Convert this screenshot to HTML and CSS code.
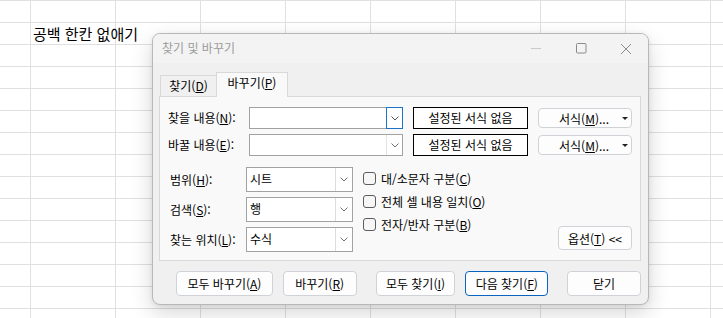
FILE: index.html
```html
<!DOCTYPE html>
<html lang="ko">
<head>
<meta charset="utf-8">
<title>찾기 및 바꾸기</title>
<link rel="stylesheet" href="styles.css">
</head>
<body>
<div class="sheet">
  <div class="cell-text">공백 한칸 없애기</div>

  <div class="dialog">
    <div class="titlebar">
      <span class="title">찾기 및 바꾸기</span>
      <span class="wc"><svg width="12" height="12" viewBox="0 0 12 12"><line x1="1" y1="5.5" x2="11" y2="5.5" stroke="#c9c9c9" stroke-width="1"/></svg></span>
      <span class="wc"><svg width="12" height="12" viewBox="0 0 12 12"><rect x="1.5" y="0.5" width="9.5" height="9.5" rx="1" fill="none" stroke="#8a8a8a" stroke-width="1"/></svg></span>
      <span class="wc"><svg width="12" height="12" viewBox="0 0 12 12"><path d="M1 1 L11 11 M11 1 L1 11" stroke="#8a8a8a" stroke-width="1" fill="none"/></svg></span>
    </div>

    <div class="dlg-body">
      <div class="tabs">
        <div class="tab">찾기(<u>D</u>)</div>
        <div class="tab tab-active">바꾸기(<u>P</u>)</div>
      </div>

      <div class="panel">
        <div class="find-row">
          <span class="lbl">찾을 내용(<u>N</u>):</span>
          <div class="combo">
            <span class="combo-field"></span>
            <span class="combo-btn combo-btn-focus"><svg width="8" height="5" viewBox="0 0 8 5"><polyline points="0.5,0.5 4,4 7.5,0.5" fill="none" stroke="#505050" stroke-width="1"/></svg></span>
          </div>
          <div class="fmt-box">설정된 서식 없음</div>
          <div class="btn fmt-btn"><span>서식(<u>M</u>)...</span><span class="caret"></span></div>
        </div>
        <div class="find-row">
          <span class="lbl">바꿀 내용(<u>E</u>):</span>
          <div class="combo">
            <span class="combo-field"></span>
            <span class="combo-btn"><svg width="8" height="5" viewBox="0 0 8 5"><polyline points="0.5,0.5 4,4 7.5,0.5" fill="none" stroke="#707070" stroke-width="1"/></svg></span>
          </div>
          <div class="fmt-box">설정된 서식 없음</div>
          <div class="btn fmt-btn"><span>서식(<u>M</u>)...</span><span class="caret"></span></div>
        </div>

        <div class="opts">
          <div class="fields">
            <span class="lbl2">범위(<u>H</u>):</span>
            <div class="select"><span class="sel-text">시트</span><span class="sel-btn"><svg width="8" height="5" viewBox="0 0 8 5"><polyline points="0.5,0.5 4,4 7.5,0.5" fill="none" stroke="#707070" stroke-width="1"/></svg></span></div>
            <span class="lbl2">검색(<u>S</u>):</span>
            <div class="select"><span class="sel-text">행</span><span class="sel-btn"><svg width="8" height="5" viewBox="0 0 8 5"><polyline points="0.5,0.5 4,4 7.5,0.5" fill="none" stroke="#707070" stroke-width="1"/></svg></span></div>
            <span class="lbl2">찾는 위치(<u>L</u>):</span>
            <div class="select"><span class="sel-text">수식</span><span class="sel-btn"><svg width="8" height="5" viewBox="0 0 8 5"><polyline points="0.5,0.5 4,4 7.5,0.5" fill="none" stroke="#707070" stroke-width="1"/></svg></span></div>
          </div>

          <div class="checks">
            <div class="chk"><span class="box"></span>대/소문자 구분(<u>C</u>)</div>
            <div class="chk"><span class="box"></span>전체 셀 내용 일치(<u>O</u>)</div>
            <div class="chk"><span class="box"></span>전자/반자 구분(<u>B</u>)</div>
          </div>

          <div class="btn opt-btn">옵션(<u>T</u>) &lt;&lt;</div>
        </div>
      </div>

      <div class="actions">
        <div class="btn act w97">모두 바꾸기(<u>A</u>)</div>
        <div class="btn act w74 g10">바꾸기(<u>R</u>)</div>
        <div class="btn act w80 g19">모두 찾기(<u>I</u>)</div>
        <div class="btn act w83 g10 primary">다음 찾기(<u>F</u>)</div>
        <div class="btn act w74 g19">닫기</div>
      </div>
    </div>
  </div>
</div>
</body>
</html>
```

FILE: styles.css
```css
* { box-sizing: border-box; }

body {
  margin: 0;
  font-family: "Noto Sans CJK KR", "Noto Sans", sans-serif;
  color: #000;
}

u {
  text-decoration-thickness: 1px;
  text-underline-offset: 1px;
}

.sheet {
  position: relative;
  width: 723px;
  height: 318px;
  overflow: hidden;
  background-color: #fff;
  background-image:
    linear-gradient(to right, #e0e0e0 1px, transparent 1px),
    linear-gradient(to bottom, #e0e0e0 1px, transparent 1px);
  background-size: 85px 22px;
  background-position: 30px 0;
}

.cell-text {
  margin-top: 23px;
  padding-left: 33px;
  height: 21px;
  line-height: 21px;
  font-size: 15px;
}

.dialog {
  position: absolute;
  left: 152px;
  top: 33px;
  width: 497px;
  height: 272px;
  background: #f0f0f0;
  border: 1px solid #b8b8b8;
  border-radius: 8px;
  overflow: hidden;
  box-shadow: 0 8px 22px rgba(0, 0, 0, 0.16), 0 1px 5px rgba(0, 0, 0, 0.08);
}

.titlebar {
  display: flex;
  height: 29px;
  background: #f3f3f3;
}

.title {
  flex: 1;
  padding-left: 9px;
  line-height: 27px;
  font-size: 12px;
  color: #9b9b9b;
}

.wc {
  width: 45px;
  height: 29px;
  display: flex;
  align-items: center;
  justify-content: center;
}

.dlg-body {
  padding: 0 7px 0 6px;
}

.tabs {
  position: relative;
  z-index: 1;
  display: flex;
  align-items: flex-end;
  height: 25px;
  margin-top: 9px;
  margin-bottom: -1px;
  padding-left: 1px;
}

.tab {
  width: 56px;
  height: 21px;
  margin-bottom: 1px;
  border: 1px solid #d9d9d9;
  border-bottom: none;
  border-right: none;
  background: #f0f0f0;
  text-align: center;
  font-size: 12px;
  line-height: 20px;
}

.tab-active {
  width: 72px;
  height: 25px;
  margin-bottom: 0;
  border-right: 1px solid #d9d9d9;
  background: #f9f9f9;
  line-height: 20px;
}

.panel {
  height: 165px;
  border: 1px solid #d9d9d9;
  background: #f9f9f9;
  padding: 10px 8px 0 8px;
}

.find-row {
  display: flex;
  align-items: center;
  height: 22px;
}

.find-row + .find-row { margin-top: 5px; }

.lbl {
  width: 81px;
  font-size: 12px;
  line-height: 16px;
}

.combo {
  display: flex;
  width: 154px;
  height: 22px;
  border: 1px solid #a2a2a2;
  background: #fff;
}

.combo-field { flex: 1; }

.combo-btn {
  width: 16px;
  display: flex;
  align-items: center;
  justify-content: center;
  border-left: 1px solid #e2e2e2;
}

.combo-btn-focus {
  width: 17px;
  margin: -1px -1px -1px 0;
  border: 1px solid #1a73c8;
}

.fmt-box {
  margin-left: 10px;
  width: 115px;
  height: 22px;
  border: 1px solid #000;
  background: #fff;
  text-align: center;
  font-size: 12px;
  line-height: 19px;
}

.btn {
  display: flex;
  align-items: center;
  justify-content: center;
  border: 1px solid #cfd3d8;
  border-radius: 4px;
  background: #fdfdfd;
  font-size: 12px;
}

.fmt-btn {
  margin-left: 10px;
  width: 94px;
  height: 20px;
  justify-content: flex-start;
  padding-left: 20px;
  padding-right: 3px;
}

.caret {
  margin-left: auto;
  width: 0;
  height: 0;
  border-left: 3px solid transparent;
  border-right: 3px solid transparent;
  border-top: 3px solid #222;
}

.opts {
  display: flex;
  margin-top: 11px;
}

.fields {
  display: grid;
  grid-template-columns: 78px 107px;
  grid-auto-rows: 25px;
  row-gap: 5px;
  align-items: center;
}

.lbl2 {
  padding-left: 2px;
  font-size: 12px;
  line-height: 16px;
}

.select {
  display: flex;
  height: 25px;
  border: 1px solid #a2a2a2;
  background: #fff;
}

.sel-text {
  flex: 1;
  padding-left: 3px;
  font-size: 12px;
  line-height: 22px;
}

.sel-btn {
  width: 17px;
  display: flex;
  align-items: center;
  justify-content: center;
  border-left: 1px solid #dcdcdc;
}

.checks {
  margin-left: 10px;
  display: flex;
  flex-direction: column;
  row-gap: 1px;
}

.chk {
  display: flex;
  align-items: center;
  height: 22px;
  font-size: 12px;
}

.box {
  width: 13px;
  height: 13px;
  margin-right: 5px;
  border: 1px solid #5c5c5c;
  border-radius: 3px;
  background: #f6f6f6;
}

.opt-btn {
  margin-left: auto;
  margin-top: 59px;
  width: 74px;
  height: 24px;
}

.actions {
  display: flex;
  margin-top: 10px;
  padding-left: 17px;
}

.act { height: 25px; }
.w97 { width: 97px; }
.w74 { width: 74px; }
.w80 { width: 80px; }
.w83 { width: 83px; }
.g10 { margin-left: 10px; }
.g19 { margin-left: 19px; }

.primary {
  border-color: #0a64c0;
}
```
